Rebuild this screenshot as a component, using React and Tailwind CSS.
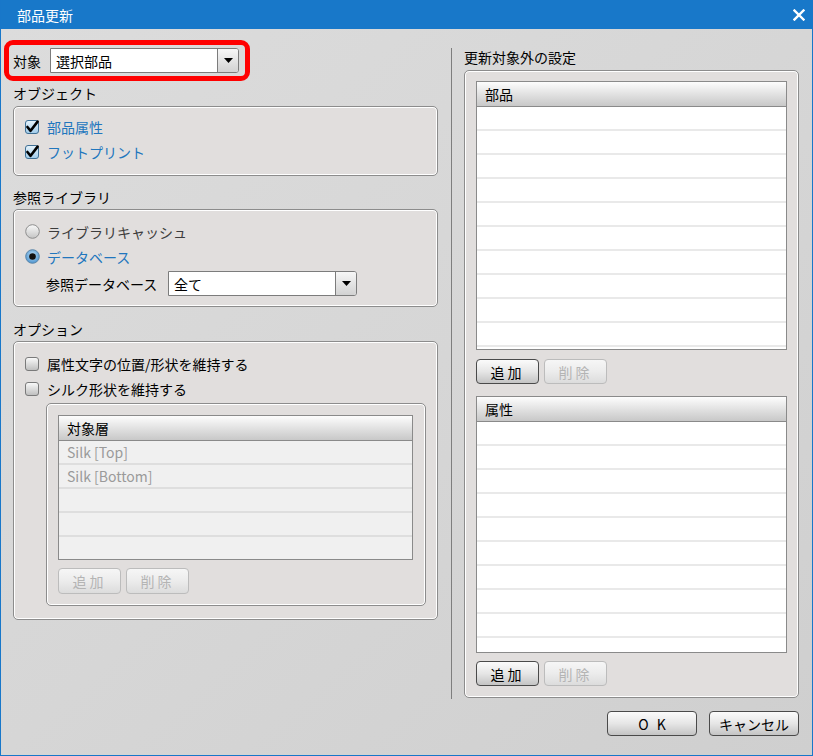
import React from 'react';

const font = { fontFamily: '"Noto Sans CJK JP", "Noto Sans", sans-serif' };

function CheckBox({ checked }) {
  if (checked) {
    return (
      <svg width="14" height="14" viewBox="0 0 14 14" className="shrink-0 overflow-visible">
        <defs>
          <linearGradient id="cbOn" x1="0" y1="0" x2="0" y2="1">
            <stop offset="0" stopColor="#e8f4fc" />
            <stop offset="1" stopColor="#9fcbea" />
          </linearGradient>
        </defs>
        <rect x="0.5" y="0.5" width="13" height="13" rx="2.5" fill="url(#cbOn)" stroke="#3f6f94" />
        <path d="M2.4 7 L5.6 10.8 L12.6 1.6" fill="none" stroke="#000" strokeWidth="2.6" strokeLinecap="round" strokeLinejoin="round" />
      </svg>
    );
  }
  return (
    <svg width="14" height="14" viewBox="0 0 14 14" className="shrink-0">
      <defs>
        <linearGradient id="cbOff" x1="0" y1="0" x2="0" y2="1">
          <stop offset="0" stopColor="#fbfbfb" />
          <stop offset="1" stopColor="#bdbdbd" />
        </linearGradient>
      </defs>
      <rect x="0.5" y="0.5" width="13" height="13" rx="2.5" fill="url(#cbOff)" stroke="#7a7a7a" />
    </svg>
  );
}

function Radio({ selected }) {
  return (
    <svg width="15" height="15" viewBox="0 0 15 15" className="shrink-0">
      <defs>
        <linearGradient id="rdOff" x1="0" y1="0" x2="0" y2="1">
          <stop offset="0" stopColor="#fafafa" />
          <stop offset="1" stopColor="#c4c4c4" />
        </linearGradient>
        <radialGradient id="rdOn" cx="0.5" cy="0.4" r="0.6">
          <stop offset="0" stopColor="#bfe0f7" />
          <stop offset="1" stopColor="#4b93cf" />
        </radialGradient>
      </defs>
      <circle cx="7.5" cy="7.5" r="6.8" fill={selected ? 'url(#rdOn)' : 'url(#rdOff)'} stroke={selected ? '#5d86a8' : '#8e8e8e'} />
      {selected && <circle cx="7.5" cy="7.5" r="3.3" fill="#111" />}
    </svg>
  );
}

function Select({ value, width }) {
  return (
    <div className={`flex h-[25px] bg-white border border-[#7c7c7c] rounded-r-[3px] ${width}`}>
      <div className="flex-1 flex items-center pl-[5px] text-[14px] leading-[18px] text-black">{value}</div>
      <div className="w-[21px] border-l border-[#7c7c7c] bg-gradient-to-b from-[#f7f7f7] to-[#d2d2d2] flex items-center justify-center rounded-r-[2px]">
        <svg width="9" height="5" viewBox="0 0 9 5">
          <path d="M0 0 H9 L4.5 5 Z" fill="#000" />
        </svg>
      </div>
    </div>
  );
}

function Btn({ children, disabled, w = 'w-[63px]', h = 'h-[26px]' }) {
  return (
    <div
      className={`${w} ${h} rounded-[4px] flex items-center justify-center text-[14px] leading-[18px] tracking-[3px] ${
        disabled
          ? 'border border-[#bcbcbc] bg-gradient-to-b from-[#f6f6f6] via-[#ececec] to-[#dcdcdc] text-[#b4b4b4]'
          : 'border border-[#4a4a4a] bg-gradient-to-b from-[#fbfbfb] via-[#e6e6e6] to-[#c4c4c4] text-black'
      }`}
    >
      {children}
    </div>
  );
}

function Group({ className = '', children }) {
  return (
    <div className={`border border-[#8c8c8c] rounded-[5px] bg-[#e1dedd] shadow-[inset_0_0_0_1px_#ffffff] ${className}`}>
      {children}
    </div>
  );
}

function Table({ title, rows, height, width, white }) {
  return (
    <div className={`border border-[#8a8a8a] overflow-hidden flex flex-col ${height} ${width} ${white ? 'bg-white' : 'bg-[#f0f0f0]'}`}>
      <div className="h-[25px] shrink-0 border-b border-[#8a8a8a] bg-gradient-to-b from-[#fdfdfd] to-[#c8c8c8] flex items-center pl-[8px] text-[14px] leading-[18px] text-black">
        {title}
      </div>
      {rows.map((r, i) => (
        <div
          key={i}
          className={`shrink-0 flex items-center pl-[8px] text-[14px] leading-[18px] text-[#9a9a9a] ${
            white ? 'h-[24px] border-b-2 border-[#e9e9e9]' : 'h-[24px] border-b-2 border-[#dedede]'
          }`}
        >
          {r}
        </div>
      ))}
    </div>
  );
}

function App() {
  return (
    <div className="w-[813px] h-[756px] flex flex-col border-x border-b border-[#1877c9] overflow-hidden" style={font}>
      {/* title bar */}
      <div className="h-[29px] shrink-0 bg-[#1878c9] flex items-center justify-between pl-[17px] pr-[8px] -mx-px">
        <span className="text-white text-[14px] leading-[18px]">部品更新</span>
        <svg width="12" height="12" viewBox="0 0 12 12">
          <path d="M1.5 1.5 L10.5 10.5 M10.5 1.5 L1.5 10.5" stroke="#fff" strokeWidth="2.4" strokeLinecap="square" />
        </svg>
      </div>

      <div className="flex-1 flex flex-col bg-gradient-to-br from-[#dcdcdc] via-[#d6d6d6] to-[#cfcfcf]">
        <div className="flex">
          {/* left column */}
          <div className="w-[450px] flex flex-col pt-[11px]">
            <div className="ml-[3px] w-[246px] h-[41px] border-[5px] border-[#ff0000] rounded-[9px] flex items-center pl-[4px] gap-[9px]">
              <span className="text-[14px] leading-[18px] text-black">対象</span>
              <Select value="選択部品" width="w-[189px]" />
            </div>

            <div className="ml-[12px] mt-[3px] text-[14px] leading-[18px] text-black">オブジェクト</div>
            <Group className="ml-[12px] mt-[4px] w-[425px] h-[70px] pt-[7px] pl-[11px]">
              <div className="h-[25px] flex items-center gap-[8px] text-[14px] leading-[18px] text-[#2176bd]">
                <CheckBox checked />
                <span>部品属性</span>
              </div>
              <div className="h-[25px] flex items-center gap-[8px] text-[14px] leading-[18px] text-[#2176bd]">
                <CheckBox checked />
                <span>フットプリント</span>
              </div>
            </Group>

            <div className="ml-[12px] mt-[12px] text-[14px] leading-[18px] text-black">参照ライブラリ</div>
            <Group className="ml-[12px] mt-[3px] w-[425px] h-[98px] pt-[9px] pl-[11px]">
              <div className="h-[25px] flex items-center gap-[7px] text-[14px] leading-[18px] text-[#3c3c3c]">
                <Radio />
                <span>ライブラリキャッシュ</span>
              </div>
              <div className="h-[25px] flex items-center gap-[7px] text-[14px] leading-[18px] text-[#2176bd]">
                <Radio selected />
                <span>データベース</span>
              </div>
              <div className="mt-[2px] h-[25px] flex items-center pl-[21px] gap-[10px]">
                <span className="w-[112px] text-[14px] leading-[18px] text-black whitespace-nowrap">参照データベース</span>
                <Select value="全て" width="w-[189px]" />
              </div>
            </Group>

            <div className="ml-[12px] mt-[13px] text-[14px] leading-[18px] text-black">オプション</div>
            <Group className="ml-[12px] mt-[3px] w-[425px] h-[279px] pt-[9px] pl-[11px]">
              <div className="h-[25px] flex items-center gap-[8px] text-[14px] leading-[18px] text-black">
                <CheckBox />
                <span>属性文字の位置/形状を維持する</span>
              </div>
              <div className="h-[25px] flex items-center gap-[8px] text-[14px] leading-[18px] text-black">
                <CheckBox />
                <span>シルク形状を維持する</span>
              </div>
              <Group className="mt-[2px] ml-[21px] w-[380px] h-[203px] pt-[11px] pl-[11px]">
                <Table title="対象層" rows={['Silk [Top]', 'Silk [Bottom]', '', '', '', '']} height="h-[145px]" width="w-[355px]" />
                <div className="mt-[8px] flex gap-[5px]">
                  <Btn disabled>追加</Btn>
                  <Btn disabled>削除</Btn>
                </div>
              </Group>
            </Group>
          </div>

          {/* separator */}
          <div className="w-px bg-[#7e7e7e] mt-[19px] h-[651px]" />

          {/* right column */}
          <div className="flex-1 flex flex-col pl-[12px] pt-[19px]">
            <div className="text-[14px] leading-[18px] text-black">更新対象外の設定</div>
            <Group className="mt-[4px] w-[335px] h-[628px] pt-[10px] pl-[11px]">
              <Table title="部品" rows={Array(11).fill('')} height="h-[269px]" width="w-[311px]" white />
              <div className="mt-[9px] flex gap-[5px]">
                <Btn h="h-[25px]">追加</Btn>
                <Btn disabled h="h-[25px]">削除</Btn>
              </div>
              <div className="mt-[12px]">
                <Table title="属性" rows={Array(11).fill('')} height="h-[257px]" width="w-[311px]" white />
              </div>
              <div className="mt-[8px] flex gap-[5px]">
                <Btn h="h-[25px]">追加</Btn>
                <Btn disabled h="h-[25px]">削除</Btn>
              </div>
            </Group>
          </div>
        </div>

        {/* bottom buttons */}
        <div className="mt-[12px] flex justify-end gap-[12px] pr-[13px]">
          <Btn w="w-[90px]" h="h-[25px]">
            <span className="tracking-[8px] pl-[8px]">OK</span>
          </Btn>
          <Btn w="w-[90px]" h="h-[25px]">
            <span className="tracking-normal">キャンセル</span>
          </Btn>
        </div>
      </div>
    </div>
  );
}

export default App;
